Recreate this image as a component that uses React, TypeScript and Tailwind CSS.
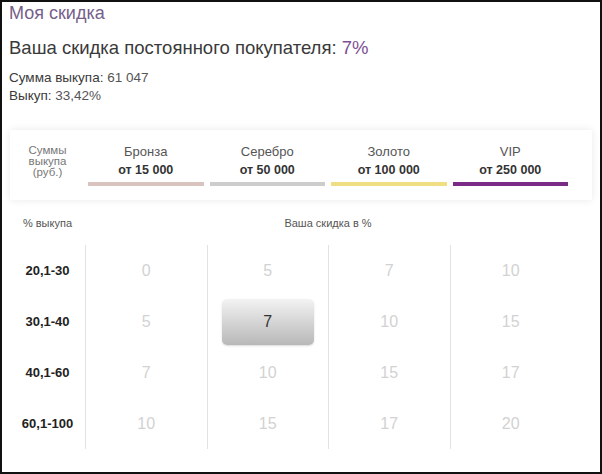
import React from 'react';

const tiers = [
    { name: 'Бронза', from: 'от 15 000', bar: 'bg-[#d8c3bf]' },
    { name: 'Серебро', from: 'от 50 000', bar: 'bg-[#cdcdcd]' },
    { name: 'Золото', from: 'от 100 000', bar: 'bg-[#f0de84]' },
    { name: 'VIP', from: 'от 250 000', bar: 'bg-[#7a2b86]' },
];

const ranges = ['20,1-30', '30,1-40', '40,1-60', '60,1-100'];

// one array per tier column, top to bottom
const discounts = [
    [0, 5, 7, 10],
    [5, 7, 10, 15],
    [7, 10, 15, 17],
    [10, 15, 17, 20],
];

const current = { col: 1, row: 1 };

const App: React.FC = () => {
    return (
        <div className="w-[602px] h-[474px] border-2 border-[#111] bg-white overflow-hidden px-[8px] font-['Liberation_Sans',Arial,sans-serif]">
            <div className="-ml-[1px] text-[18px] leading-[22px] text-[#75608a]">Моя скидка</div>
            <div className="-ml-[1px] mt-[12px] text-[18.5px] leading-[24px] text-[#3a3a3a]">
                Ваша скидка постоянного покупателя: <span className="text-[#7d4f93]">7%</span>
            </div>
            <div className="-ml-[1px] mt-[9px] text-[13.5px] leading-[18px] text-[#3a3a3a]">
                <div>Сумма выкупа: <span className="text-[#555]">61 047</span></div>
                <div>Выкуп: <span className="text-[#555]">33,42%</span></div>
            </div>

            <div className="mt-[25px] h-[70px] flex bg-white shadow-[0_0_8px_rgba(0,0,0,0.09)]">
                <div className="w-[75px] pt-[15px] text-center text-[11.5px] leading-[11px] text-[#777]">
                    Суммы<br />выкупа<br />(руб.)
                </div>
                {tiers.map(tier => (
                    <div key={tier.name} className="w-[121.5px] px-[3px] pt-[14px] text-center">
                        <div className="text-[13px] leading-[16px] text-[#555]">{tier.name}</div>
                        <div className="mt-[2px] text-[12.5px] leading-[16px] font-bold text-[#333]">{tier.from}</div>
                        <div className={`mt-[4px] h-[4px] ${tier.bar}`} />
                    </div>
                ))}
            </div>

            <div className="mt-[16px] flex text-[11px] leading-[14px] text-[#555]">
                <div className="w-[75px] text-center">% выкупа</div>
                <div className="w-[486px] text-center">Ваша скидка в %</div>
            </div>

            <div className="mt-[15px] flex">
                <div className="w-[75px]">
                    {ranges.map(r => (
                        <div key={r} className="h-[51px] flex items-center justify-center text-[13px] font-bold text-[#222]">{r}</div>
                    ))}
                </div>
                {discounts.map((col, ci) => (
                    <div key={ci} className="w-[121.5px] border-l border-[#e2e2e2]">
                        {col.map((v, ri) => (
                            <div key={ri} className="h-[51px] flex items-center justify-center text-[16px]">
                                {ci === current.col && ri === current.row ? (
                                    <div className="w-[92px] h-[46px] rounded-[5px] bg-linear-to-b from-[#f3f3f3] to-[#b8b8b8] shadow-[0_1px_2px_rgba(0,0,0,0.15)] flex items-center justify-center text-[#333]">
                                        {v}
                                    </div>
                                ) : (
                                    <span className="text-[#d2d2d2]">{v}</span>
                                )}
                            </div>
                        ))}
                    </div>
                ))}
            </div>
        </div>
    );
};

export default App;
